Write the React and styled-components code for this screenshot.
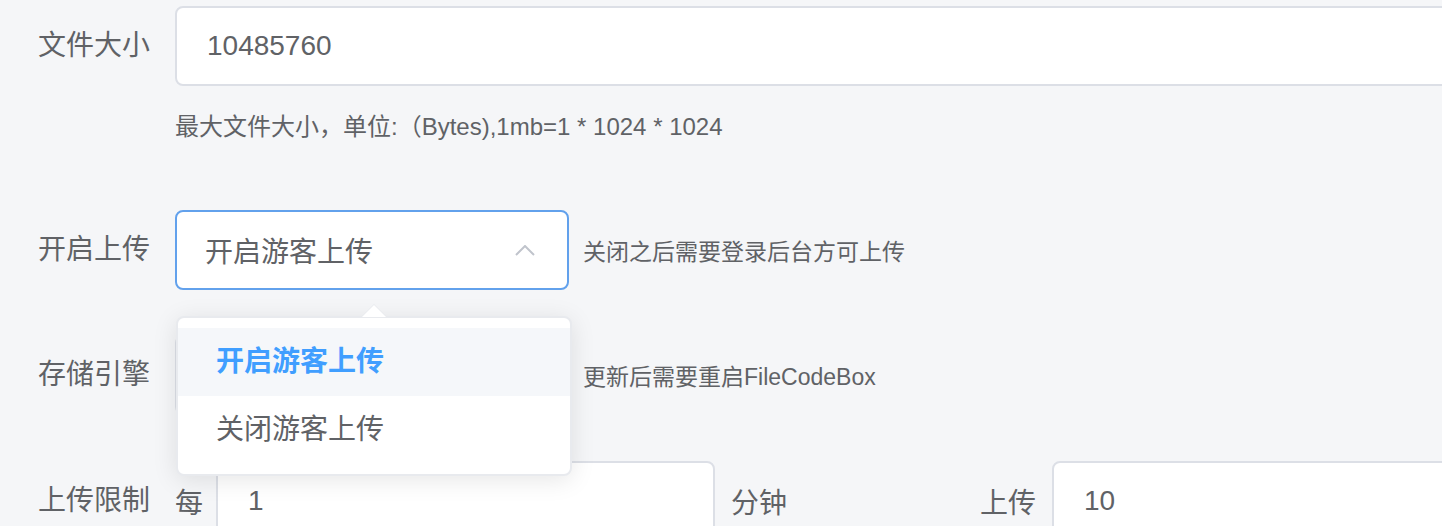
import React from "react";
import styled, { createGlobalStyle } from "styled-components";

const Global = createGlobalStyle`
  html, body { margin: 0; padding: 0; background: #f5f6f8; }
  body {
    font-family: "Liberation Sans", "Noto Sans CJK SC", sans-serif;
    color: #606266;
  }
`;

const Page = styled.div`
  width: 1442px;
  height: 526px;
  overflow: hidden;
  padding-top: 6px;
  box-sizing: border-box;
`;

const FormItem = styled.div`
  display: flex;
  align-items: flex-start;
  margin-bottom: ${(p) => p.$mb ?? 45}px;
`;

const Label = styled.label`
  flex: 0 0 175px;
  box-sizing: border-box;
  padding-right: 25px;
  text-align: right;
  font-size: 28px;
  line-height: 80px;
  height: 80px;
  color: #606266;
`;

const Content = styled.div`
  flex: 1;
  min-width: 0;
  display: flex;
  flex-direction: ${(p) => (p.$column ? "column" : "row")};
  align-items: ${(p) => (p.$column ? "flex-start" : "center")};
`;

const Input = styled.div`
  box-sizing: border-box;
  width: ${(p) => p.$w}px;
  flex: 0 0 auto;
  height: 80px;
  border: 2px solid #dcdfe6;
  border-radius: 8px;
  background: #fff;
  padding: 0 30px;
  font-size: 28px;
  line-height: 76px;
  color: #606266;
  white-space: nowrap;
`;

const Help = styled.div`
  font-size: 24px;
  line-height: 40px;
  margin-top: 21px;
  color: #606266;
  white-space: nowrap;
`;

const Hint = styled.span`
  font-size: 23px;
  margin-left: 14px;
  color: #606266;
  white-space: nowrap;
`;

const SelectWrap = styled.div`
  position: relative;
  flex: 0 0 auto;
`;

const SelectBox = styled.div`
  box-sizing: border-box;
  width: 394px;
  height: 80px;
  border: 2px solid ${(p) => (p.$focus ? "#62a1ec" : "#dcdfe6")};
  border-radius: 8px;
  background: #fff;
  padding: 0 32px 0 28px;
  display: flex;
  align-items: center;
  justify-content: space-between;
  font-size: 28px;
  color: #606266;
`;

const Dropdown = styled.div`
  position: absolute;
  left: 1px;
  top: 106px;
  width: 396px;
  box-sizing: border-box;
  background: #fff;
  border: 2px solid #e8eaee;
  border-radius: 8px;
  box-shadow: 0 4px 24px 0 rgba(0, 0, 0, 0.1);
  padding: 10px 0;
  z-index: 10;
`;

const Arrow = styled.div`
  position: absolute;
  left: 184px;
  top: -13px;
  width: 0;
  height: 0;
  border-left: 12px solid transparent;
  border-right: 12px solid transparent;
  border-bottom: 12px solid #fff;
  filter: drop-shadow(0 -1px 0 #e8eaee);
`;

const Option = styled.div`
  height: 68px;
  line-height: 68px;
  padding: 0 38px;
  font-size: 28px;
  color: ${(p) => (p.$active ? "#409eff" : "#606266")};
  font-weight: ${(p) => (p.$active ? 700 : 400)};
  background: ${(p) => (p.$active ? "#f5f7fa" : "#fff")};
`;

const Unit = styled.span`
  font-size: 28px;
  color: #606266;
  white-space: nowrap;
  flex: 0 0 auto;
  width: ${(p) => p.$w}px;
  margin-left: ${(p) => p.$ml ?? 0}px;
`;

const Chevron = () => (
  <svg width="20" height="11" viewBox="0 0 20 11">
    <polyline points="1,10 10,1 19,10" fill="none" stroke="#c0c4cc" strokeWidth="2" />
  </svg>
);

export default function App() {
  return (
    <>
      <Global />
      <Page>
        <FormItem $mb={63}>
          <Label>文件大小</Label>
          <Content $column>
            <Input $w={1400}>10485760</Input>
            <Help>最大文件大小，单位:（Bytes),1mb=1 * 1024 * 1024</Help>
          </Content>
        </FormItem>

        <FormItem $mb={45}>
          <Label>开启上传</Label>
          <Content>
            <SelectWrap>
              <SelectBox $focus>
                <span>开启游客上传</span>
                <Chevron />
              </SelectBox>
              <Dropdown>
                <Arrow />
                <Option $active>开启游客上传</Option>
                <Option>关闭游客上传</Option>
              </Dropdown>
            </SelectWrap>
            <Hint>关闭之后需要登录后台方可上传</Hint>
          </Content>
        </FormItem>

        <FormItem $mb={46}>
          <Label>存储引擎</Label>
          <Content>
            <SelectWrap>
              <SelectBox>
                <span />
                <Chevron />
              </SelectBox>
            </SelectWrap>
            <Hint>更新后需要重启FileCodeBox</Hint>
          </Content>
        </FormItem>

        <FormItem>
          <Label>上传限制</Label>
          <Content>
            <Unit $w={41}>每</Unit>
            <Input $w={499}>1</Input>
            <Unit $w={249} $ml={16}>分钟</Unit>
            <Unit $w={72}>上传</Unit>
            <Input $w={600}>10</Input>
          </Content>
        </FormItem>
      </Page>
    </>
  );
}
